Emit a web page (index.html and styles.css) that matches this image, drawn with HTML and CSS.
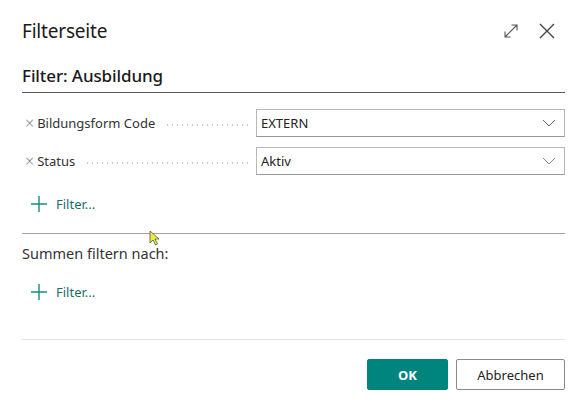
FILE: index.html
```html
<!DOCTYPE html>
<html lang="de">
<head>
<meta charset="utf-8">
<title>Filterseite</title>
<link rel="stylesheet" href="styles.css">
</head>
<body>
<div class="dialog">
  <div class="header">
    <h1 class="title">Filterseite</h1>
    <div class="header-actions">
      <svg class="icon-expand" width="16" height="16" viewBox="0 0 16 16"><path d="M2 14 L14 2 M8.5 2 H14 V7.5 M2 8.5 V14 H7.5" fill="none" stroke="#555" stroke-width="1.1"/></svg>
      <svg class="icon-close" width="18" height="18" viewBox="0 0 18 18"><path d="M2 2 L16 16 M16 2 L2 16" fill="none" stroke="#444" stroke-width="1.4"/></svg>
    </div>
  </div>
  <h2 class="section-title">Filter: Ausbildung</h2>
  <div class="filters">
    <div class="filter-row">
      <div class="label"><span class="remove">×</span><span class="label-text">Bildungsform Code</span><span class="leader"></span></div>
      <div class="select"><span>EXTERN</span><svg class="chev" width="14" height="8" viewBox="0 0 14 8"><path d="M1 1 L7 7 L13 1" fill="none" stroke="#666" stroke-width="1"/></svg></div>
    </div>
    <div class="filter-row">
      <div class="label"><span class="remove">×</span><span class="label-text">Status</span><span class="leader"></span></div>
      <div class="select"><span>Aktiv</span><svg class="chev" width="14" height="8" viewBox="0 0 14 8"><path d="M1 1 L7 7 L13 1" fill="none" stroke="#888" stroke-width="1"/></svg></div>
    </div>
  </div>
  <div class="add-filter first"><svg width="16" height="16" viewBox="0 0 16 16"><path d="M8 0 V16 M0 8 H16" stroke="#178a80" stroke-width="1.4"/></svg><span>Filter...</span></div>
  <div class="divider"></div>
  <div class="sum-label">Summen filtern nach:</div>
  <div class="add-filter second"><svg width="16" height="16" viewBox="0 0 16 16"><path d="M8 0 V16 M0 8 H16" stroke="#178a80" stroke-width="1.4"/></svg><span>Filter...</span></div>
  <div class="divider light"></div>
  <div class="footer">
    <button class="btn btn-primary">OK</button>
    <button class="btn btn-secondary">Abbrechen</button>
  </div>
  <svg class="cursor" width="12" height="16" viewBox="0 0 12 16"><path d="M1 1 L1 13 L4 10 L6.5 15 L8.5 14 L6 9 L10 9 Z" fill="#e8ec3a" stroke="#555" stroke-width="0.8"/></svg>
</div>
</body>
</html>
```

FILE: styles.css
```css
* { box-sizing: border-box; }
html, body { margin: 0; padding: 0; background: #fff; }
body {
  font-family: "Noto Sans", "Open Sans", sans-serif;
  color: #212121;
  width: 586px;
  height: 410px;
  overflow: hidden;
}
.dialog {
  position: relative;
  padding: 0 21px 0 22px;
}
.header {
  display: flex;
  align-items: center;
  justify-content: space-between;
  height: 60px;
  padding-top: 1px;
}
.title {
  margin: 0;
  font-size: 19px;
  font-weight: 400;
  letter-spacing: -0.2px;
  color: #1a1a1a;
}
.header-actions {
  display: flex;
  align-items: center;
  gap: 19px;
  padding-right: 9px;
}
.section-title {
  margin: 5px 0 0;
  font-size: 17px;
  font-weight: 500;
  letter-spacing: -0.1px;
  color: #1a1a1a;
  padding-bottom: 5px;
  border-bottom: 1px solid #5a5a5a;
  line-height: 22px;
}
.filters {
  display: flex;
  flex-direction: column;
  gap: 10px;
  margin-top: 16px;
}
.filter-row {
  display: grid;
  grid-template-columns: 234px 1fr;
  align-items: center;
}
.label {
  display: flex;
  align-items: center;
  font-size: 13px;
  color: #333;
  padding-left: 3px;
}
.remove {
  font-size: 16px;
  font-weight: 300;
  color: #888;
  margin-right: 3px;
  line-height: 1;
}
.leader {
  flex: 1;
  margin: 4px 8px 0 10px;
  height: 2px;
  background-image: radial-gradient(circle, #c8c8c8 0.8px, transparent 1px);
  background-size: 5px 2px;
  background-repeat: repeat-x;
}
.select {
  display: flex;
  align-items: center;
  justify-content: space-between;
  height: 28px;
  border: 1px solid #b8b8b8;
  border-bottom-color: #999;
  padding: 0 8px 0 4px;
  font-size: 13px;
  color: #222;
}
.add-filter {
  display: flex;
  align-items: center;
  gap: 9px;
  padding-left: 9px;
  font-size: 13px;
  color: #1c6f69;
}
.add-filter.first { margin-top: 20px; }
.add-filter.second { margin-top: 20px; }
.divider {
  height: 1px;
  background: #a0a0a0;
  margin-top: 20px;
}
.divider.light {
  background: #e3e3e3;
  margin-top: 38px;
}
.sum-label {
  margin-top: 9px;
  font-size: 14.5px;
  color: #333;
}
.footer {
  display: flex;
  justify-content: flex-end;
  gap: 8px;
  margin-top: 19px;
}
.btn {
  height: 31px;
  font-family: inherit;
  font-size: 13px;
  border-radius: 2px;
}
.btn-primary {
  width: 81px;
  background: #00857e;
  border: 1px solid #00857e;
  color: #fff;
  font-weight: 700;
}
.btn-secondary {
  width: 109px;
  background: #fff;
  border: 1px solid #8a8a8a;
  color: #222;
}
.cursor {
  position: absolute;
  left: 149px;
  top: 230px;
}
```
